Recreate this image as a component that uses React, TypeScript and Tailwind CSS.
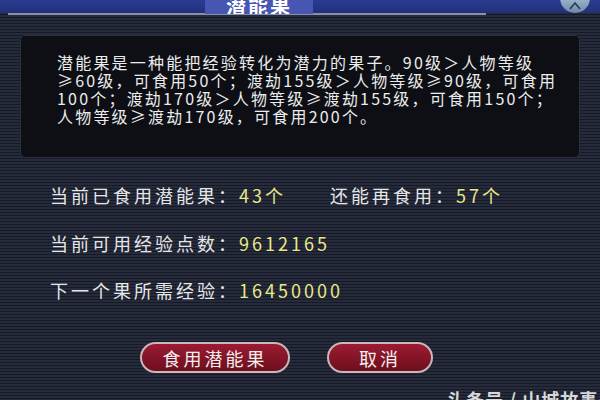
import React from 'react';

const font = { fontFamily: '"Noto Sans CJK SC", "Noto Sans", sans-serif' };

const descLines = [
  '潜能果是一种能把经验转化为潜力的果子。90级＞人物等级',
  '≥60级，可食用50个；渡劫155级＞人物等级≥90级，可食用',
  '100个；渡劫170级＞人物等级≥渡劫155级，可食用150个；',
  '人物等级≥渡劫170级，可食用200个。',
];

const Stat: React.FC<{ label: string; value: string }> = ({ label, value }) => (
  <span className="whitespace-nowrap">
    <span className="text-[#e6e6e6]">{label}</span>
    <span className="text-[#e8e88a]">{value}</span>
  </span>
);

export default function App() {
  return (
    <div
      className="relative w-[600px] h-[400px] overflow-hidden flex flex-col bg-[repeating-linear-gradient(to_bottom,#262b3b_0px,#262b3b_2px,#161a26_2px,#161a26_3px)]"
      style={font}
    >
      {/* Title bar */}
      <div className="relative h-[16px] shrink-0">
        <div className="flex h-[13px] bg-gradient-to-b from-[#2b3c92] to-[#22317a]">
          <div className="w-[205px]" />
          <div className="w-[108px] h-[14px] overflow-hidden bg-[#4656b2] flex justify-center">
            <span className="text-[20px] leading-none -mt-[4px] text-white tracking-[2px] font-bold">潜能果</span>
          </div>
          <div className="flex-1" />
          <div className="w-[30px] h-[15px] -mt-[2px] mr-[10px] rounded-b-full bg-gradient-to-b from-[#9fb6cc] to-[#6f8aa6] flex items-center justify-center">
            <svg width="14" height="10" viewBox="0 0 14 10">
              <path d="M2 8 L7 2 L12 8" fill="none" stroke="#2a3a5a" strokeWidth="1.6" />
            </svg>
          </div>
        </div>
        <div className="ml-[8px] w-[478px] h-[2px] bg-[#8a90a8]" />
      </div>

      {/* Description */}
      <div className="mt-[19px] mx-[20px] h-[123px] shrink-0 rounded-[5px] border border-[#2c3140] bg-[#0d0f15] pl-[36px] pt-[17px] text-[16px] leading-[18px] tracking-[2.2px] text-[#ececec]">
        {descLines.map((l, i) => (
          <div key={i} className="whitespace-nowrap">{l}</div>
        ))}
      </div>

      {/* Stats */}
      <div className="mt-[25px] pl-[50px] flex flex-col gap-[23.5px] text-[18px] leading-[24px] tracking-[3px]">
        <div className="flex">
          <div className="w-[280px]">
            <Stat label="当前已食用潜能果：" value="43个" />
          </div>
          <Stat label="还能再食用：" value="57个" />
        </div>
        <Stat label="当前可用经验点数：" value="9612165" />
        <Stat label="下一个果所需经验：" value="16450000" />
      </div>

      {/* Buttons */}
      <div className="mt-[40px] pl-[140px] flex gap-[37px]">
        <button className="w-[150px] h-[31px] rounded-full border-2 border-[#c9b7ba] bg-gradient-to-b from-[#9c1b32] to-[#6e0e1e] text-[18px] text-[#f2eeee] tracking-[3px] leading-none">
          食用潜能果
        </button>
        <button className="w-[106px] h-[31px] rounded-full border-2 border-[#c9b7ba] bg-gradient-to-b from-[#9c1b32] to-[#6e0e1e] text-[18px] text-[#f2eeee] tracking-[3px] leading-none">
          取消
        </button>
      </div>

      {/* Watermark */}
      <div className="absolute left-[447px] top-[390px] whitespace-nowrap text-[18px] leading-none text-[#d8d8d8] font-bold tracking-[1px]">
        头条号 / 山城故事多
      </div>
    </div>
  );
}
